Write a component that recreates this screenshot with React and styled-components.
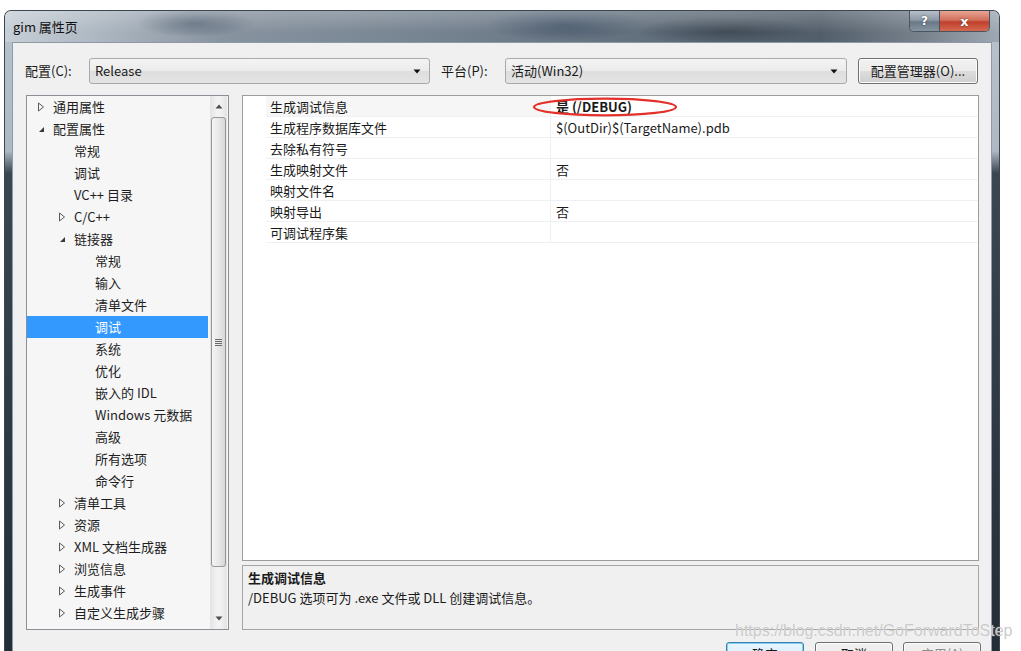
import React from 'react';
import styled, { createGlobalStyle } from 'styled-components';

const Global = createGlobalStyle`
  html, body { margin: 0; padding: 0; background: #fff; }
  body {
    font-family: "Noto Sans CJK SC", "Liberation Sans", sans-serif;
    font-size: 13px;
    color: #1a1a1a;
  }
  #root { width: 1021px; height: 651px; overflow: hidden; }
`;

const Stage = styled.div`
  position: relative;
  width: 1021px;
  height: 651px;
  box-sizing: border-box;
  padding: 10px 0 0 4px;
  overflow: hidden;
`;

const Window = styled.div`
  width: 996px;
  height: 720px;
  box-sizing: border-box;
  border: 1px solid #3b4650;
  border-bottom: none;
  border-radius: 7px 7px 0 0;
  overflow: hidden;
  display: flex;
  flex-direction: column;
  background: linear-gradient(to bottom, #b9c3cc 0, #aeb8c2 140px, #3a4651 162px, #1f2932 100%);
`;

const TitleBar = styled.div`
  height: 31px;
  flex: none;
  display: flex;
  align-items: flex-start;
  padding: 0 9px 0 8px;
  background:
    linear-gradient(to bottom, rgba(255,255,255,0.22), rgba(255,255,255,0) 70%),
    radial-gradient(ellipse 60px 14px at 190px 12px, rgba(60,75,95,0.55), rgba(60,75,95,0)),
    radial-gradient(ellipse 80px 16px at 560px 14px, rgba(40,60,85,0.5), rgba(40,60,85,0)),
    radial-gradient(ellipse 90px 14px at 720px 20px, rgba(30,40,50,0.45), rgba(30,40,50,0)),
    linear-gradient(to right, #c6ced6 0%, #aeb8c2 9%, #8893a0 22%, #7a8794 38%, #6d7a88 52%, #5f6c79 68%, #525e6a 82%, #76818c 92%, #9ea8b2 100%);
`;

const Title = styled.div`
  flex: 1;
  line-height: 31px;
  font-size: 13px;
  color: #111;
`;

const Captions = styled.div`
  display: flex;
  height: 20px;
  border: 1px solid #4a5561;
  border-top: none;
  border-radius: 0 0 5px 5px;
  overflow: hidden;
`;

const CapBtn = styled.div`
  width: ${p => p.$w}px;
  height: 20px;
  display: flex;
  align-items: center;
  justify-content: center;
  font-family: "DejaVu Sans", sans-serif;
  font-weight: bold;
  font-size: ${p => (p.$close ? 13 : 12)}px;
  color: #fff;
  text-shadow: 0 0 2px rgba(0,0,0,0.6);
  background: ${p => (p.$close
    ? 'linear-gradient(to bottom, #e8a493 0%, #d2705d 45%, #c0402c 55%, #d46a52 100%)'
    : 'linear-gradient(to bottom, #b7c0c9 0%, #8c99a6 45%, #6b7987 55%, #8593a0 100%)')};
  border-left: ${p => (p.$close ? '1px solid #4a5561' : 'none')};
`;

const FrameBody = styled.div`
  flex: 1;
  padding: 0 7px;
  display: flex;
`;

const Client = styled.div`
  flex: 1;
  box-sizing: border-box;
  background: #f0f0f0;
  border: 1px solid #8d99a4;
  border-bottom: none;
  padding: 15px 12px 0 13px;
  display: flex;
  flex-direction: column;
`;

const TopRow = styled.div`
  display: flex;
  align-items: center;
  height: 26px;
`;

const Label = styled.div`
  width: ${p => p.$w}px;
  margin-left: ${p => p.$ml || 0}px;
  padding-bottom: 2px;
  font-size: 13px;
  color: #1a1a1a;
`;

const Combo = styled.div`
  width: ${p => p.$w}px;
  height: 26px;
  box-sizing: border-box;
  border: 1px solid #a9a9a9;
  border-radius: 3px;
  background: linear-gradient(to bottom, #f4f4f4 0%, #ebebeb 50%, #dedede 51%, #e4e4e4 100%);
  display: flex;
  align-items: center;
  padding: 0 8px 0 5px;
  font-size: 13px;
`;

const ComboText = styled.span`
  flex: 1;
  padding-bottom: 2px;
`;

const Button = styled.div`
  width: ${p => p.$w}px;
  height: ${p => p.$h || 26}px;
  box-sizing: border-box;
  border: 1px solid ${p => (p.$default ? '#3c7fb1' : '#707070')};
  border-radius: 3px;
  background: ${p => (p.$default
    ? 'linear-gradient(to bottom, #eaf6fd 0%, #d9f0fc 50%, #bee6fd 51%, #a7d9f5 100%)'
    : 'linear-gradient(to bottom, #f2f2f2 0%, #ebebeb 50%, #dddddd 51%, #cfcfcf 100%)')};
  box-shadow: ${p => (p.$default ? 'inset 0 0 0 1px #7fd0f5' : 'inset 0 0 0 1px #fcfcfc')};
  display: flex;
  align-items: center;
  justify-content: center;
  padding-bottom: 2px;
  font-size: 13px;
  color: ${p => (p.$disabled ? '#8d8d8d' : '#1a1a1a')};
`;

const Main = styled.div`
  margin-top: 11px;
  height: 535px;
  display: grid;
  grid-template-columns: 203px 1fr;
  column-gap: 13px;
`;

const TreeBox = styled.div`
  box-sizing: border-box;
  border: 1px solid #8a8f96;
  background: #f6f6f6;
  display: flex;
`;

const TreeList = styled.div`
  flex: 1;
  display: flex;
  flex-direction: column;
`;

const TreeRow = styled.div`
  height: 22px;
  box-sizing: border-box;
  display: flex;
  align-items: center;
  padding-left: ${p => 10 + p.$level * 21}px;
  padding-bottom: 2px;
  background: ${p => (p.$selected ? '#3399ff' : 'transparent')};
  color: ${p => (p.$selected ? '#fff' : '#1e1e1e')};
  font-size: 13px;
  white-space: nowrap;
`;

const Toggle = styled.span`
  width: 16px;
  flex: none;
  display: flex;
  align-items: center;
  padding-top: 1px;
`;

const ScrollBar = styled.div`
  width: 17px;
  margin: 0 1px 0 2px;
  display: flex;
  flex-direction: column;
  background: linear-gradient(to right, #e3e3e3, #f2f2f2 40%, #f2f2f2 60%, #e3e3e3);
`;

const ScrollBtn = styled.div`
  height: 21px;
  display: flex;
  align-items: center;
  justify-content: center;
`;

const Thumb = styled.div`
  height: 450px;
  margin: 0 1px;
  box-sizing: border-box;
  border: 1px solid #979797;
  border-radius: 3px;
  background: linear-gradient(to right, #f5f5f5 0%, #e8e8e8 50%, #d6d6d6 100%);
  display: flex;
  align-items: center;
  justify-content: center;
`;

const Grip = styled.div`
  width: 7px;
  height: 7px;
  background: repeating-linear-gradient(to bottom, #6a6a6a 0 1px, transparent 1px 2px);
`;

const Track = styled.div`
  flex: 1;
`;

const RightCol = styled.div`
  display: flex;
  flex-direction: column;
  gap: 4px;
  min-width: 0;
`;

const Grid = styled.div`
  flex: 1;
  box-sizing: border-box;
  border: 1px solid #9c9c9c;
  background: #fff;
`;

const PropRow = styled.div`
  display: grid;
  grid-template-columns: 23px 285px 1fr;
  height: 21px;
`;

const Margin = styled.div``;

const Cell = styled.div`
  position: relative;
  box-sizing: border-box;
  border-bottom: 1px solid #eef0f4;
  border-right: ${p => (p.$name ? '1px solid #eef0f4' : 'none')};
  background: ${p => (p.$tint ? '#f6f6f6' : '#fff')};
  padding-left: ${p => (p.$name ? 4 : 5)}px;
  padding-top: 1px;
  line-height: 19px;
  font-size: 13px;
  font-weight: ${p => (p.$bold ? 'bold' : 'normal')};
  color: #1a1a1a;
  white-space: nowrap;
`;

const Ring = styled.svg`
  position: absolute;
  left: -19px;
  top: 1px;
  pointer-events: none;
`;

const Desc = styled.div`
  height: 65px;
  box-sizing: border-box;
  border: 1px solid #a5a5a5;
  background: #f0f0f0;
  padding: 2px 5px;
`;

const DescTitle = styled.div`
  font-weight: bold;
  line-height: 20px;
  font-size: 13px;
`;

const DescText = styled.div`
  line-height: 20px;
  font-size: 13px;
`;

const ButtonRow = styled.div`
  margin-top: 12px;
  margin-right: -2px;
  display: flex;
  justify-content: flex-end;
  gap: 11px;
`;

const Watermark = styled.div`
  position: absolute;
  left: 735px;
  top: 622px;
  font-family: "Liberation Sans", Arial, sans-serif;
  font-size: 16px;
  color: rgba(196, 196, 196, 0.9);
  text-shadow: 0 0 1px rgba(255,255,255,0.8);
  white-space: nowrap;
  pointer-events: none;
`;

const Closed = () => (
  <svg width="8" height="10" viewBox="0 0 8 10">
    <path d="M1.5 1 L6.5 5 L1.5 9 Z" fill="none" stroke="#5a5a5a" strokeWidth="1" />
  </svg>
);

const Open = () => (
  <svg width="8" height="10" viewBox="0 0 8 10">
    <path d="M7 3 L7 8 L2 8 Z" fill="#3a3a3a" />
  </svg>
);

const DownArrow = ({ color = '#111' }) => (
  <svg width="8" height="5" viewBox="0 0 8 5">
    <path d="M0.5 0.5 L7.5 0.5 L4 4.5 Z" fill={color} />
  </svg>
);

const UpArrow = () => (
  <svg width="8" height="5" viewBox="0 0 8 5">
    <path d="M0.5 4.5 L7.5 4.5 L4 0.5 Z" fill="#4d4d4d" />
  </svg>
);

const tree = [
  { l: 0, t: 'c', s: '通用属性' },
  { l: 0, t: 'o', s: '配置属性' },
  { l: 1, s: '常规' },
  { l: 1, s: '调试' },
  { l: 1, s: 'VC++ 目录' },
  { l: 1, t: 'c', s: 'C/C++' },
  { l: 1, t: 'o', s: '链接器' },
  { l: 2, s: '常规' },
  { l: 2, s: '输入' },
  { l: 2, s: '清单文件' },
  { l: 2, s: '调试', sel: true },
  { l: 2, s: '系统' },
  { l: 2, s: '优化' },
  { l: 2, s: '嵌入的 IDL' },
  { l: 2, s: 'Windows 元数据' },
  { l: 2, s: '高级' },
  { l: 2, s: '所有选项' },
  { l: 2, s: '命令行' },
  { l: 1, t: 'c', s: '清单工具' },
  { l: 1, t: 'c', s: '资源' },
  { l: 1, t: 'c', s: 'XML 文档生成器' },
  { l: 1, t: 'c', s: '浏览信息' },
  { l: 1, t: 'c', s: '生成事件' },
  { l: 1, t: 'c', s: '自定义生成步骤' },
];

const props = [
  { n: '生成调试信息', v: '是 (/DEBUG)', bold: true, ring: true, tint: true },
  { n: '生成程序数据库文件', v: '$(OutDir)$(TargetName).pdb' },
  { n: '去除私有符号', v: '' },
  { n: '生成映射文件', v: '否' },
  { n: '映射文件名', v: '' },
  { n: '映射导出', v: '否' },
  { n: '可调试程序集', v: '' },
];

export default function App() {
  return (
    <Stage>
      <Global />
      <Window>
        <TitleBar>
          <Title>gim 属性页</Title>
          <Captions>
            <CapBtn $w={29}>?</CapBtn>
            <CapBtn $w={49} $close>x</CapBtn>
          </Captions>
        </TitleBar>
        <FrameBody>
          <Client>
            <TopRow>
              <Label $w={64} $ml={-1}>配置(C):</Label>
              <Combo $w={341}>
                <ComboText>Release</ComboText>
                <DownArrow />
              </Combo>
              <Label $w={64} $ml={11}>平台(P):</Label>
              <Combo $w={342}>
                <ComboText>活动(Win32)</ComboText>
                <DownArrow />
              </Combo>
              <Button $w={120} style={{ marginLeft: 11 }}>配置管理器(O)...</Button>
            </TopRow>
            <Main>
              <TreeBox>
                <TreeList>
                  {tree.map((r, i) => (
                    <TreeRow key={i} $level={r.l} $selected={r.sel}>
                      <Toggle>{r.t === 'c' ? <Closed /> : r.t === 'o' ? <Open /> : null}</Toggle>
                      {r.s}
                    </TreeRow>
                  ))}
                </TreeList>
                <ScrollBar>
                  <ScrollBtn><UpArrow /></ScrollBtn>
                  <Thumb><Grip /></Thumb>
                  <Track />
                  <ScrollBtn><DownArrow color="#4d4d4d" /></ScrollBtn>
                </ScrollBar>
              </TreeBox>
              <RightCol>
                <Grid>
                  {props.map((p, i) => (
                    <PropRow key={i}>
                      <Margin />
                      <Cell $name $tint={p.tint}>{p.n}</Cell>
                      <Cell $bold={p.bold}>
                        {p.v}
                        {p.ring && (
                          <Ring width="148" height="20" viewBox="0 0 148 20">
                            <ellipse cx="73" cy="10" rx="71" ry="8.4" fill="none" stroke="#e4302a" strokeWidth="2.2" />
                          </Ring>
                        )}
                      </Cell>
                    </PropRow>
                  ))}
                </Grid>
                <Desc>
                  <DescTitle>生成调试信息</DescTitle>
                  <DescText>/DEBUG 选项可为 .exe 文件或 DLL 创建调试信息。</DescText>
                </Desc>
              </RightCol>
            </Main>
            <ButtonRow>
              <Button $w={78} $h={24} $default>确定</Button>
              <Button $w={78} $h={24}>取消</Button>
              <Button $w={78} $h={24} $disabled style={{ marginLeft: -1 }}>应用(A)</Button>
            </ButtonRow>
          </Client>
        </FrameBody>
      </Window>
      <Watermark>https://blog.csdn.net/GoForwardToStep</Watermark>
    </Stage>
  );
}
